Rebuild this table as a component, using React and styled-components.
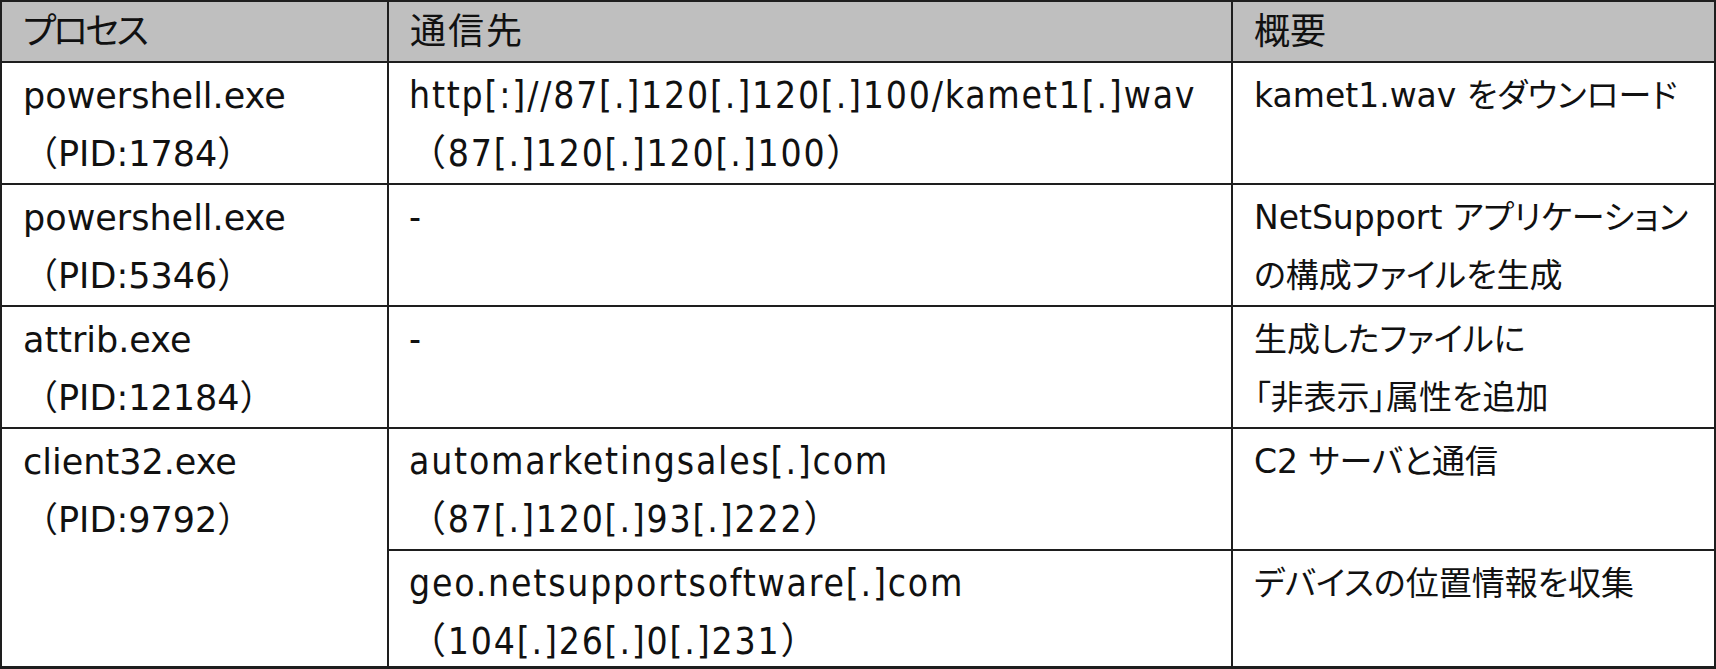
import React from "react";
import styled, { createGlobalStyle } from "styled-components";

const Global = createGlobalStyle`
  html, body { margin: 0; padding: 0; background: #fff; }
`;

const Frame = styled.div`
  box-sizing: border-box;
  width: 1716px;
  height: 669px;
  border: 2px solid #1e1e1e;
  border-bottom-width: 3px;
  overflow: hidden;
`;

const Table = styled.table`
  width: 100%;
  border-collapse: collapse;
  border-style: hidden;
  table-layout: fixed;
  font-family: "DejaVu Sans", "Noto Sans CJK JP", sans-serif;
  font-size: 35px;
  color: #111;
`;

const Row = styled.tr`
  height: ${(p) => p.$h}px;
`;

const HeadCell = styled.th`
  background: #bfbfbf;
  border: 2px solid #1e1e1e;
  padding: 0 0 0 21px;
  text-align: left;
  font-weight: normal;
  font-size: 36px;
  line-height: 58px;
  vertical-align: middle;
  font-feature-settings: "palt";
  letter-spacing: ${(p) => p.$ls || 0}px;
`;

const Cell = styled.td`
  border: 2px solid #1e1e1e;
  padding: 4px 0 0 ${(p) => (p.$kind === "dest" ? 20 : 21)}px;
  vertical-align: top;
  line-height: 58px;
  white-space: nowrap;
  overflow: hidden;
  ${(p) =>
    p.$kind === "dest" &&
    `font-family: "DejaVu Sans Condensed", "DejaVu Sans", "Noto Sans CJK JP", sans-serif;
     font-stretch: condensed;
     font-size: 37px;
     letter-spacing: 1.8px;`}
  ${(p) =>
    p.$kind === "desc" &&
    `font-size: 33px;
     font-feature-settings: "palt";`}
`;

const Line = styled.div`
  display: block;
`;

const rows = [
  {
    proc: ["powershell.exe", "（PID:1784）"],
    dest: ["http[:]//87[.]120[.]120[.]100/kamet1[.]wav", "（87[.]120[.]120[.]100）"],
    desc: ["kamet1.wav をダウンロード"],
  },
  {
    proc: ["powershell.exe", "（PID:5346）"],
    dest: ["-"],
    desc: ["NetSupport アプリケーション", "の構成ファイルを生成"],
  },
  {
    proc: ["attrib.exe", "（PID:12184）"],
    dest: ["-"],
    desc: ["生成したファイルに", "「非表示」属性を追加"],
  },
];

const Lines = ({ items }) => items.map((t, i) => <Line key={i}>{t}</Line>);

export default function App() {
  return (
    <>
      <Global />
      <Frame>
        <Table>
          <colgroup>
            <col style={{ width: 386 }} />
            <col style={{ width: 844 }} />
            <col />
          </colgroup>
          <thead>
            <Row $h={60}>
              <HeadCell $ls={-3}>プロセス</HeadCell>
              <HeadCell $ls={2}>通信先</HeadCell>
              <HeadCell>概要</HeadCell>
            </Row>
          </thead>
          <tbody>
            {rows.map((r, i) => (
              <Row $h={121} key={i}>
                <Cell $kind="proc"><Lines items={r.proc} /></Cell>
                <Cell $kind="dest"><Lines items={r.dest} /></Cell>
                <Cell $kind="desc"><Lines items={r.desc} /></Cell>
              </Row>
            ))}
            <Row $h={120}>
              <Cell $kind="proc" rowSpan={2}><Lines items={["client32.exe", "（PID:9792）"]} /></Cell>
              <Cell $kind="dest"><Lines items={["automarketingsales[.]com", "（87[.]120[.]93[.]222）"]} /></Cell>
              <Cell $kind="desc"><Lines items={["C2 サーバと通信"]} /></Cell>
            </Row>
            <Row $h={121}>
              <Cell $kind="dest"><Lines items={["geo.netsupportsoftware[.]com", "（104[.]26[.]0[.]231）"]} /></Cell>
              <Cell $kind="desc"><Lines items={["デバイスの位置情報を収集"]} /></Cell>
            </Row>
          </tbody>
        </Table>
      </Frame>
    </>
  );
}
